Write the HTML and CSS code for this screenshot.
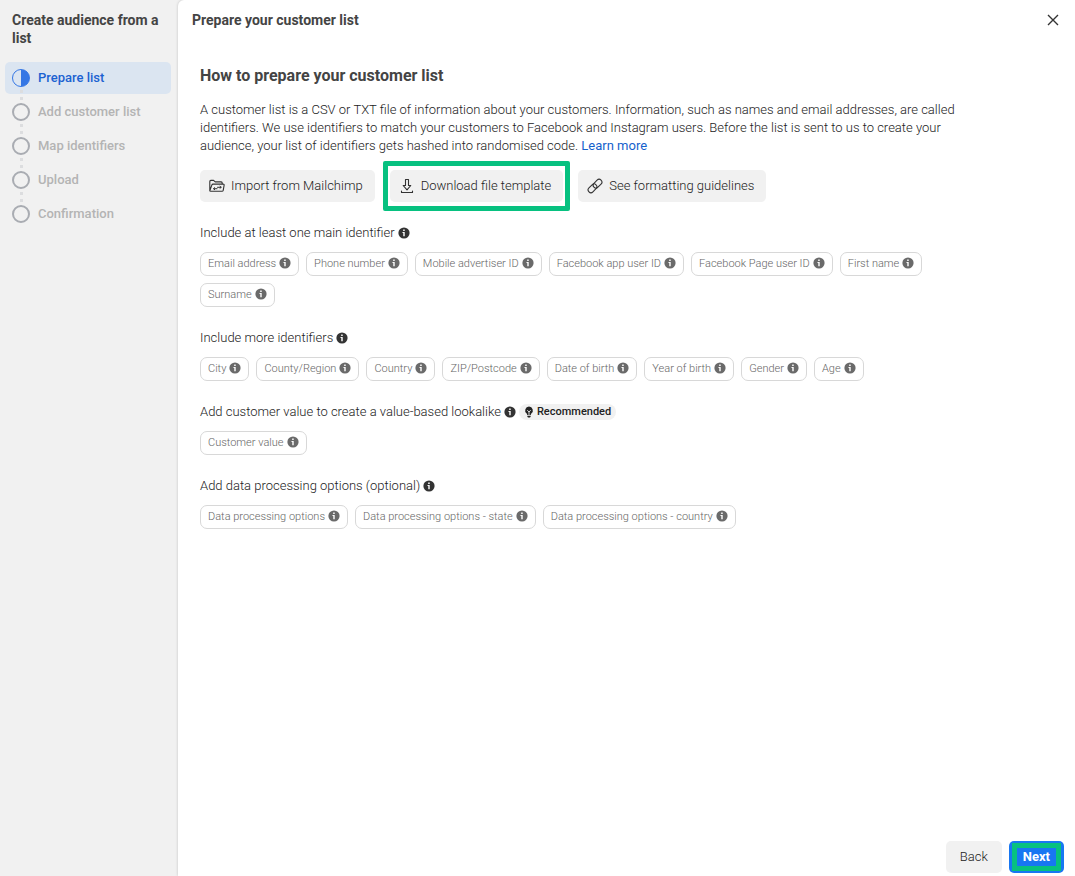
FILE: index.html
```html
<!DOCTYPE html>
<html lang="en">
<head>
    <meta charset="UTF-8">
    <meta name="viewport" content="width=device-width, initial-scale=1.0">
    <title>Create audience from a list</title>
    <link rel="stylesheet" href="styles.css">
</head>
<body>
    <!-- shared icons -->
    <svg class="icon-defs" aria-hidden="true">
        <symbol id="info" viewBox="0 0 12 12">
            <circle cx="6" cy="6" r="5.6" fill="currentColor"/>
            <path d="M5.200 2.500h1.500V4H5.200zM4.500 5h2.200v4.200H5.300V6h-.8z" fill="#fff"/>
        </symbol>
    </svg>

    <aside class="sidebar">
        <h1 class="sidebar-title">Create audience from a list</h1>
        <ol class="steps">
            <li class="step active"><span class="circle"></span>Prepare list</li>
            <li class="step"><span class="circle"></span>Add customer list</li>
            <li class="step"><span class="circle"></span>Map identifiers</li>
            <li class="step"><span class="circle"></span>Upload</li>
            <li class="step"><span class="circle"></span>Confirmation</li>
        </ol>
    </aside>

    <main class="panel">
        <header class="panel-header">
            <h2 class="panel-title">Prepare your customer list</h2>
            <button class="close" type="button" aria-label="Close">
                <svg width="12" height="12" viewBox="0 0 12 12"><path d="M1 1l10 10M11 1L1 11" stroke="#333" stroke-width="1.4"/></svg>
            </button>
        </header>

        <div class="content">
            <h3 class="heading">How to prepare your customer list</h3>
            <p class="intro">A customer list is a CSV or TXT file of information about your customers. Information, such as names and email addresses, are called identifiers. We use identifiers to match your customers to Facebook and Instagram users. Before the list is sent to us to create your audience, your list of identifiers gets hashed into randomised code. <a href="#">Learn more</a></p>

            <div class="actions">
                <button class="btn" type="button">
                    <svg width="16" height="16" viewBox="0 0 16 16" fill="none" stroke="#333" stroke-width="1.1" stroke-linejoin="round" stroke-linecap="round">
                        <path d="M.8 12.8V3.4q0-1 1-1h2.8l1.6 1.5h6q1 0 1 1v1.2M.8 12.8l2-5.7q.3-1 1.3-1h10q1.2 0 1 1.2l-.9 5q-.2 1-1.2 1H1.8q-1 0-1-.5z"/>
                        <path d="M5.700 9.700l-1.200 1 1.200 1M4.800 10.700h3.200M8.500 9.300h3.500M11 8.300l1.200 1-1.200 1" stroke-width="1"/>
                    </svg>
                    Import from Mailchimp
                </button>
                <button class="btn highlight" type="button">
                    <svg width="16" height="16" viewBox="0 0 16 16" fill="none" stroke="#333" stroke-width="1.1" stroke-linejoin="round" stroke-linecap="round">
                        <path d="M6.500 1.500h3v6h2.300L8 11.800 4.200 7.500h2.300z"/>
                        <path d="M2.500 13v1.500h11V13"/>
                    </svg>
                    Download file template
                </button>
                <button class="btn" type="button">
                    <svg width="16" height="16" viewBox="0 0 16 16" fill="none" stroke="#333" stroke-width="1.1">
                        <rect x="5.500" y="2.900" width="10" height="5.600" rx="2.800" transform="rotate(-45 10.500 5.700)"/>
                        <rect x=".5" y="7.500" width="10" height="5.600" rx="2.800" transform="rotate(-45 5.500 10.300)"/>
                    </svg>
                    See formatting guidelines
                </button>
            </div>

            <section class="group">
                <h4 class="label">Include at least one main identifier <svg class="info"><use href="#info"/></svg></h4>
                <ul class="chips">
                    <li class="chip">Email address <svg class="info"><use href="#info"/></svg></li>
                    <li class="chip">Phone number <svg class="info"><use href="#info"/></svg></li>
                    <li class="chip">Mobile advertiser ID <svg class="info"><use href="#info"/></svg></li>
                    <li class="chip">Facebook app user ID <svg class="info"><use href="#info"/></svg></li>
                    <li class="chip">Facebook Page user ID <svg class="info"><use href="#info"/></svg></li>
                    <li class="chip">First name <svg class="info"><use href="#info"/></svg></li>
                    <li class="chip">Surname <svg class="info"><use href="#info"/></svg></li>
                </ul>
            </section>

            <section class="group">
                <h4 class="label">Include more identifiers <svg class="info"><use href="#info"/></svg></h4>
                <ul class="chips">
                    <li class="chip">City <svg class="info"><use href="#info"/></svg></li>
                    <li class="chip">County/Region <svg class="info"><use href="#info"/></svg></li>
                    <li class="chip">Country <svg class="info"><use href="#info"/></svg></li>
                    <li class="chip">ZIP/Postcode <svg class="info"><use href="#info"/></svg></li>
                    <li class="chip">Date of birth <svg class="info"><use href="#info"/></svg></li>
                    <li class="chip">Year of birth <svg class="info"><use href="#info"/></svg></li>
                    <li class="chip">Gender <svg class="info"><use href="#info"/></svg></li>
                    <li class="chip">Age <svg class="info"><use href="#info"/></svg></li>
                </ul>
            </section>

            <section class="group">
                <h4 class="label">Add customer value to create a value-based lookalike <svg class="info"><use href="#info"/></svg>
                    <span class="badge">
                        <svg width="10" height="12" viewBox="0 0 10 12">
                            <path d="M5 .6a3.9 3.9 0 0 0-2.3 7L3.300 9h3.400l.6-1.400A3.900 3.900 0 0 0 5 .6zM3.300 9.700h3.400v.8L6 11.500H4l-.7-1z" fill="#222"/>
                            <path d="M3.300 4.200L5 6l1.700-1.800M5 6v3" fill="none" stroke="#f1f1f1" stroke-width=".9"/>
                        </svg>
                        Recommended
                    </span>
                </h4>
                <ul class="chips">
                    <li class="chip">Customer value <svg class="info"><use href="#info"/></svg></li>
                </ul>
            </section>

            <section class="group">
                <h4 class="label">Add data processing options (optional) <svg class="info"><use href="#info"/></svg></h4>
                <ul class="chips">
                    <li class="chip">Data processing options <svg class="info"><use href="#info"/></svg></li>
                    <li class="chip">Data processing options - state <svg class="info"><use href="#info"/></svg></li>
                    <li class="chip">Data processing options - country <svg class="info"><use href="#info"/></svg></li>
                </ul>
            </section>
        </div>

        <footer class="panel-footer">
            <button class="btn" type="button">Back</button>
            <button class="btn primary highlight" type="button">Next</button>
        </footer>
    </main>
</body>
</html>
```
FILE: styles.css
```css
* {
    box-sizing: border-box;
}

body {
    margin: 0;
    min-height: 100vh;
    display: flex;
    background-color: #f1f1f1;
    color: #222;
    font-family: Roboto, Arial, sans-serif;
    font-size: 13px;
    font-weight: 300;
    line-height: 18px;
}

h1, h2, h3, h4, p, ol, ul {
    margin: 0;
    padding: 0;
}

ol, ul {
    list-style: none;
}

.icon-defs {
    position: absolute;
    width: 0;
    height: 0;
}

/* sidebar */
.sidebar {
    width: 178px;
    flex-shrink: 0;
    padding: 11px 7px 12px 5px;
}

.sidebar-title {
    padding: 0 0 15px 7px;
    color: #444;
    font-size: 14px;
    font-weight: 700;
}

.step {
    position: relative;
    display: flex;
    align-items: center;
    gap: 8px;
    height: 32px;
    margin-bottom: 2px;
    padding: 0 7px;
    border-radius: 5px;
    color: #b4b4b4;
    font-weight: 500;
}

.step.active {
    background-color: #dbe5f1;
    color: #1b62d1;
}

.circle {
    width: 18px;
    height: 18px;
    border: 2px solid #a9acb2;
    border-radius: 50%;
}

.step.active .circle {
    border: 1px solid #3577e5;
    background: linear-gradient(to right, transparent 50%, #3577e5 50%);
}

/* dots between the steps */
.step:not(:last-child)::after {
    content: "";
    position: absolute;
    z-index: 1;
    left: 15px;
    top: 28px;
    width: 3px;
    height: 10px;
    background: linear-gradient(#dcdddf 3px, transparent 3px) 0 0 / 3px 7px;
}

/* main panel */
.panel {
    flex: 1;
    min-width: 0;
    display: flex;
    flex-direction: column;
    background-color: #fff;
    border-top-left-radius: 6px;
    box-shadow: 0 0 3px rgba(0, 0, 0, 0.2);
}

.panel-header {
    display: flex;
    align-items: center;
    justify-content: space-between;
    height: 40px;
    padding: 0 14px;
}

.panel-title {
    color: #444;
    font-size: 14px;
    font-weight: 700;
}

.close {
    display: flex;
    padding: 2px;
    border: 0;
    background: none;
    cursor: pointer;
}

.content {
    flex: 1;
    max-width: 800px;
    padding: 27px 22px;
}

.heading {
    margin-bottom: 16px;
    color: #444;
    font-size: 16px;
    font-weight: 700;
}

.intro a {
    color: #1461cc;
    font-weight: 400;
    text-decoration: none;
}

.actions {
    display: flex;
    flex-wrap: wrap;
    gap: 15px;
    margin: 15px 0 22px;
}

.btn {
    position: relative;
    display: flex;
    align-items: center;
    gap: 6px;
    height: 32px;
    padding: 0 12px 0 9px;
    border: 0;
    border-radius: 5px;
    background-color: #f1f1f1;
    color: #222;
    font: inherit;
    cursor: pointer;
}

.highlight::after {
    content: "";
    position: absolute;
    inset: -9px -7px;
    border: 5px solid #07c180;
    border-radius: 2px;
}

.group {
    margin-bottom: 22px;
}

.label {
    display: flex;
    align-items: center;
    gap: 3px;
    margin-bottom: 10px;
    font-size: 13px;
    font-weight: 300;
}

.info {
    width: 12px;
    height: 12px;
    color: #333;
}

.badge {
    display: flex;
    align-items: center;
    gap: 3px;
    height: 16px;
    padding: 0 5px;
    border-radius: 8px;
    background-color: #f1f1f1;
    font-size: 11px;
    font-weight: 500;
}

.chips {
    display: flex;
    flex-wrap: wrap;
    gap: 7px;
}

.chip {
    display: flex;
    align-items: center;
    gap: 3px;
    height: 24px;
    padding: 0 7px;
    border: 1px solid #d8d8d8;
    border-radius: 7px;
    color: #666;
    font-size: 11px;
}

.chip .info {
    margin-bottom: 2px;
    color: #6a6a6a;
}

.panel-footer {
    display: flex;
    justify-content: flex-end;
    gap: 7px;
    padding: 3px 11px;
}

.panel-footer .btn {
    padding: 0 14px;
}

.panel-footer .primary {
    background-color: #1877f2;
    color: #fff;
    font-weight: 700;
}

.primary.highlight::after {
    inset: 2px 3px;
    border-radius: 0;
}
```
